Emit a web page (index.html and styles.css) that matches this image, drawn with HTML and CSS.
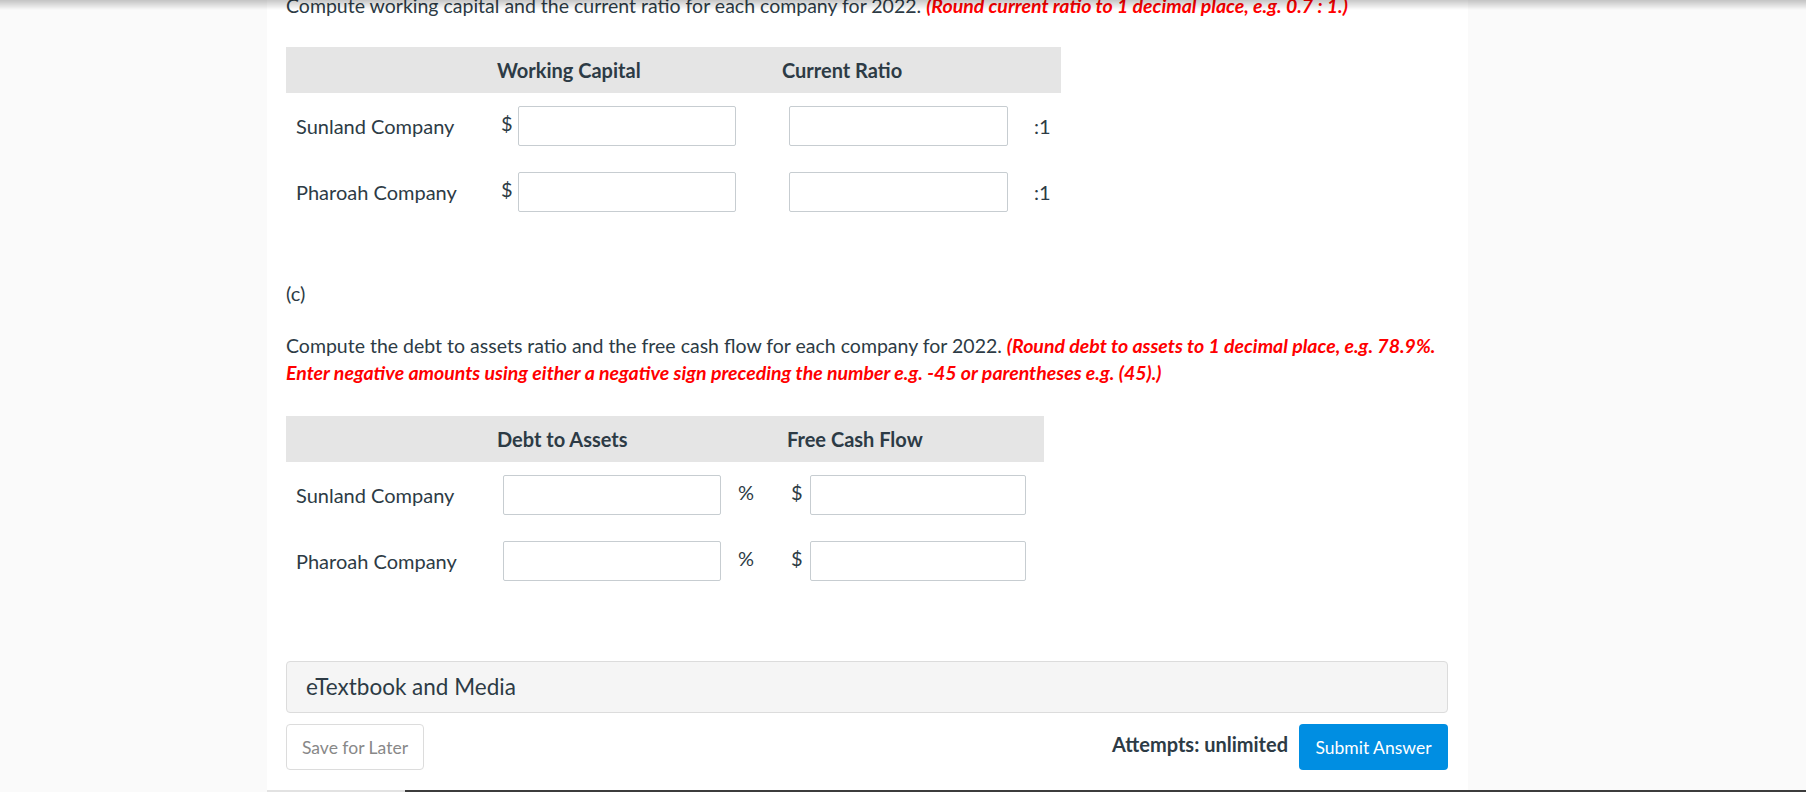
FILE: index.html
```html
<!DOCTYPE html>
<html lang="en">
<head>
    <meta charset="UTF-8">
    <meta name="viewport" content="width=device-width, initial-scale=1.0">
    <title>Question (c)</title>
    <link rel="stylesheet" href="styles.css">
</head>
<body>
    <div class="topShadow"></div>

    <div class="content">
        <p class="instructions">Compute working capital and the current ratio for each company for 2022. <span class="hint">(Round current ratio to 1 decimal place, e.g. 0.7 : 1.)</span></p>

        <div class="answerTable wcTable">
            <div class="row head">
                <div></div>
                <div class="colHead">Working Capital</div>
                <div class="colHead">Current Ratio</div>
                <div></div>
            </div>
            <div class="row">
                <div class="label">Sunland Company</div>
                <div class="cell wc"><span class="unit">$</span><input type="text" class="answer"></div>
                <div class="cell cr"><input type="text" class="answer"></div>
                <div class="cell ratio">:1</div>
            </div>
            <div class="row">
                <div class="label">Pharoah Company</div>
                <div class="cell wc"><span class="unit">$</span><input type="text" class="answer"></div>
                <div class="cell cr"><input type="text" class="answer"></div>
                <div class="cell ratio">:1</div>
            </div>
        </div>

        <p class="part">(c)</p>

        <p class="instructions second">Compute the debt to assets ratio and the free cash flow for each company for 2022. <span class="hint">(Round debt to assets to 1 decimal place, e.g. 78.9%.<br>Enter negative amounts using either a negative sign preceding the number e.g. -45 or parentheses e.g. (45).)</span></p>

        <div class="answerTable dtaTable">
            <div class="row head">
                <div></div>
                <div class="colHead">Debt to Assets</div>
                <div class="colHead">Free Cash Flow</div>
            </div>
            <div class="row">
                <div class="label">Sunland Company</div>
                <div class="cell dta"><input type="text" class="answer"><span class="pct">%</span></div>
                <div class="cell fcf"><span class="unit">$</span><input type="text" class="answer"></div>
            </div>
            <div class="row">
                <div class="label">Pharoah Company</div>
                <div class="cell dta"><input type="text" class="answer"><span class="pct">%</span></div>
                <div class="cell fcf"><span class="unit">$</span><input type="text" class="answer"></div>
            </div>
        </div>

        <div class="mediaBar">eTextbook and Media</div>

        <div class="actions">
            <button class="later">Save for Later</button>
            <span class="attempts">Attempts: unlimited</span>
            <button class="submit">Submit Answer</button>
        </div>
    </div>

    <div class="bottomBar"></div>
</body>
</html>
```

FILE: styles.css
```css
body {
    margin: 0;
    font-family: Lato, "Open Sans", sans-serif;
    font-size: 20px;
    line-height: 26.5px;
    color: #2d3b45;
    background-color: #fafafa;
    overflow: hidden;
}

.topShadow {
    position: fixed;
    top: 0;
    left: 0;
    right: 0;
    height: 10px;
    background: linear-gradient(rgba(0, 0, 0, 0.22), rgba(0, 0, 0, 0));
    z-index: 5;
}

.bottomBar {
    position: fixed;
    left: 0;
    right: 0;
    bottom: 0;
    height: 2px;
    background: linear-gradient(to right, #fafafa 0, #fafafa 267px, #e2e2e2 267px, #e2e2e2 405px, #3c3c3c 405px);
}

.content {
    width: 1201px;
    box-sizing: border-box;
    margin: -7px 0 0 267px;
    padding: 0 20px 30px 19px;
    background-color: #fff;
    min-height: 820px;
}

p {
    margin: 0;
}

.instructions {
    font-size: 19.5px;
}

.hint {
    color: #f00;
    font-weight: 700;
    font-style: italic;
}

.answerTable {
    margin-top: 27.5px;
}

.wcTable {
    width: 775px;
}

.dtaTable {
    width: 758px;
    margin-top: 30px;
}

.row {
    display: grid;
    height: 66px;
    align-items: center;
}

.wcTable .row {
    grid-template-columns: 210px 283px 245px 37px;
}

.dtaTable .row {
    grid-template-columns: 210px 288px 260px;
}

.row.head {
    height: 46px;
    background-color: #e5e5e5;
}

.colHead {
    font-weight: 700;
    padding-left: 1px;
}

.colHead + .colHead {
    padding-left: 3px;
}

.label {
    padding-left: 10px;
}

.cell {
    display: flex;
    align-items: center;
}

.unit {
    display: inline-block;
    width: 17px;
    margin-top: -6px;
}

.answer {
    width: 218px;
    height: 40px;
    box-sizing: border-box;
    border: 1px solid #c7cdd1;
    border-radius: 2px;
    background-color: #fff;
    margin: 0;
}

.cell.wc {
    padding-left: 5px;
}

.cell.cr {
    padding-left: 10px;
}

.cell.cr .answer {
    width: 219px;
}

.cell.ratio {
    padding-left: 10px;
}

.cell.dta {
    padding-left: 7px;
}

.pct {
    margin-left: 17px;
    margin-top: -6px;
}

.cell.fcf {
    padding-left: 7px;
}

.cell.fcf .unit {
    width: 19px;
}

.cell.fcf .answer {
    width: 216px;
}

.part {
    margin-top: 55px;
}

.instructions.second {
    margin-top: 26.5px;
}

.mediaBar {
    margin-top: 67px;
    height: 52px;
    box-sizing: border-box;
    border: 1px solid #dcdcdc;
    border-radius: 4px;
    background-color: #f5f5f5;
    padding-left: 19px;
    display: flex;
    align-items: center;
    font-size: 22.5px;
}

.actions {
    display: flex;
    align-items: center;
    margin-top: 11px;
}

button {
    font-family: Lato, "Open Sans", sans-serif;
    font-size: 17.5px;
    height: 46px;
    border-radius: 4px;
    cursor: pointer;
}

.later {
    width: 138px;
    border: 1px solid #dcdcdc;
    background-color: #fff;
    color: #888;
}

.attempts {
    margin-left: auto;
    margin-right: 11px;
    margin-top: -6px;
    font-weight: 700;
}

.submit {
    width: 149px;
    border: none;
    background-color: #008ee2;
    color: #fff;
}
```
